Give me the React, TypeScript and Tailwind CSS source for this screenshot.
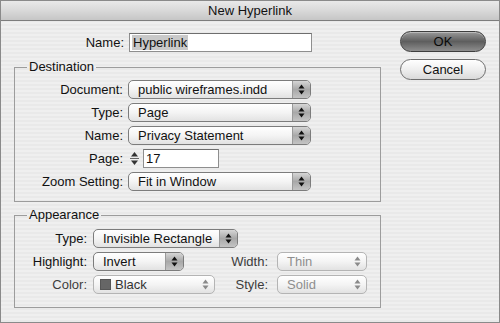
import { FC, ReactNode } from "react";

type Variant = "active" | "soft" | "disabled";

const Arrows: FC<{ color: string }> = ({ color }) => (
  <svg width="7" height="11" viewBox="0 0 7 11">
    <path d="M3.5 0.5 L6.5 4.5 L0.5 4.5 Z" fill={color} />
    <path d="M3.5 10.5 L6.5 6.5 L0.5 6.5 Z" fill={color} />
  </svg>
);

const Popup: FC<{
  value: ReactNode;
  width: string;
  variant?: Variant;
}> = ({ value, width, variant = "active" }) => {
  const active = variant === "active";
  return (
    <div
      className={`${width} h-[19px] flex items-stretch rounded-[5px] border overflow-hidden bg-gradient-to-b from-white via-[#f4f4f4] to-[#e2e2e2] ${
        active ? "border-[#7c7c7c]" : "border-[#b4b4b4]"
      }`}
    >
      <div
        className={`flex-1 flex items-center pl-[9px] leading-none ${
          variant === "disabled" ? "text-[#8e8e8e]" : "text-[#111]"
        }`}
      >
        {value}
      </div>
      <div
        className={`w-[18px] flex items-center justify-center ${
          active
            ? "bg-gradient-to-b from-[#d6d6d6] via-[#a8a8a8] to-[#c4c4c4] border-l border-[#9a9a9a]"
            : ""
        }`}
      >
        <Arrows color={active ? "#111" : "#8a8a8a"} />
      </div>
    </div>
  );
};

const Row: FC<{ label: string; labelW: string; children: ReactNode; muted?: boolean }> = ({
  label,
  labelW,
  children,
  muted,
}) => (
  <div className="flex items-center h-[19px]">
    <div className={`${labelW} text-right ${muted ? "text-[#3c3c3c]" : "text-[#111]"}`}>{label}</div>
    {children}
  </div>
);

export default function App() {
  return (
    <div
      className="w-[500px] h-[323px] border border-[#8a8a8a] flex flex-col text-[13px] text-[#111] overflow-hidden"
      style={{ fontFamily: '"Liberation Sans", Arial, sans-serif' }}
    >
      <div className="h-[20px] shrink-0 flex items-center justify-center border-b border-[#7d7d7d] bg-gradient-to-b from-[#e9e9e9] via-[#d9d9d9] to-[#c6c6c6] text-[#111]">
        New Hyperlink
      </div>

      <div className="flex-1 flex bg-[repeating-linear-gradient(0deg,#e9e9e9_0px,#e9e9e9_2px,#efefef_2px,#efefef_4px)]">
        {/* left column */}
        <div className="w-[379px] pl-[13px] pt-[12px]">
          <div className="flex items-center h-[19px]">
            <div className="w-[110px] text-right">Name:</div>
            <div className="ml-[5px] w-[183px] h-[19px] bg-white border border-[#8e8e8e] border-t-[#6e6e6e] flex items-center pl-[2px]">
              <span className="bg-[#c9c9c9] leading-[15px] px-px">Hyperlink</span>
            </div>
          </div>

          <fieldset className="mt-[7px] w-[367px] border border-[#9c9c9c] pt-[5px] pb-[10px]">
            <legend className="ml-[12px] px-[2px] leading-[16px]">Destination</legend>
            <div className="flex flex-col gap-[4px]">
              <Row label="Document:" labelW="w-[108px]">
                <div className="ml-[5px]">
                  <Popup value="public wireframes.indd" width="w-[183px]" />
                </div>
              </Row>
              <Row label="Type:" labelW="w-[108px]">
                <div className="ml-[5px]">
                  <Popup value="Page" width="w-[183px]" />
                </div>
              </Row>
              <Row label="Name:" labelW="w-[108px]">
                <div className="ml-[5px]">
                  <Popup value="Privacy Statement" width="w-[183px]" />
                </div>
              </Row>
              <Row label="Page:" labelW="w-[108px]">
                <div className="ml-[5px] flex items-center">
                  <svg width="13" height="19" viewBox="0 0 13 19">
                    <path d="M6.5 3 L10 7.5 L3 7.5 Z" fill="#333" />
                    <line x1="2" y1="9.5" x2="11" y2="9.5" stroke="#666" />
                    <path d="M6.5 16 L10 11.5 L3 11.5 Z" fill="#333" />
                  </svg>
                  <div className="ml-[2px] w-[76px] h-[19px] bg-white border border-[#8e8e8e] border-t-[#6e6e6e] flex items-center pl-[2px]">
                    17
                  </div>
                </div>
              </Row>
              <Row label="Zoom Setting:" labelW="w-[108px]">
                <div className="ml-[5px]">
                  <Popup value="Fit in Window" width="w-[183px]" />
                </div>
              </Row>
            </div>
          </fieldset>

          <fieldset className="mt-[5px] w-[367px] border border-[#9c9c9c] pt-[6px] pb-[13px]">
            <legend className="ml-[12px] px-[2px] leading-[16px]">Appearance</legend>
            <div className="flex flex-col gap-[4px]">
              <Row label="Type:" labelW="w-[72px]">
                <div className="ml-[6px]">
                  <Popup value="Invisible Rectangle" width="w-[145px]" />
                </div>
              </Row>
              <Row label="Highlight:" labelW="w-[72px]">
                <div className="ml-[6px] w-[122px]">
                  <Popup value="Invert" width="w-[91px]" />
                </div>
                <div className="w-[53px] text-right text-[#3c3c3c]">Width:</div>
                <div className="ml-[9px]">
                  <Popup value="Thin" width="w-[90px]" variant="disabled" />
                </div>
              </Row>
              <Row label="Color:" labelW="w-[72px]" muted>
                <div className="ml-[6px] w-[122px]">
                  <Popup
                    value={
                      <span className="flex items-center gap-[4px] -ml-[3px]">
                        <span className="w-[11px] h-[11px] bg-[#666] border border-[#555]" />
                        <span className="text-[#333]">Black</span>
                      </span>
                    }
                    width="w-[122px]"
                    variant="soft"
                  />
                </div>
                <div className="w-[53px] text-right text-[#3c3c3c]">Style:</div>
                <div className="ml-[9px]">
                  <Popup value="Solid" width="w-[90px]" variant="disabled" />
                </div>
              </Row>
            </div>
          </fieldset>
        </div>

        {/* buttons */}
        <div className="ml-[20px] pt-[10px] flex flex-col gap-[7px]">
          <button className="w-[86px] h-[21px] rounded-full border border-[#3e3e3e] bg-gradient-to-b from-[#9a9a9a] via-[#5e5e5e] to-[#8e8e8e] text-[#0a0a0a] font-medium leading-none shadow-[inset_0_1px_0_rgba(255,255,255,0.35)]">
            OK
          </button>
          <button className="w-[86px] h-[21px] rounded-full border border-[#6e6e6e] bg-gradient-to-b from-white via-[#efefef] to-[#dadada] text-[#111] leading-none">
            Cancel
          </button>
        </div>
      </div>
    </div>
  );
}
